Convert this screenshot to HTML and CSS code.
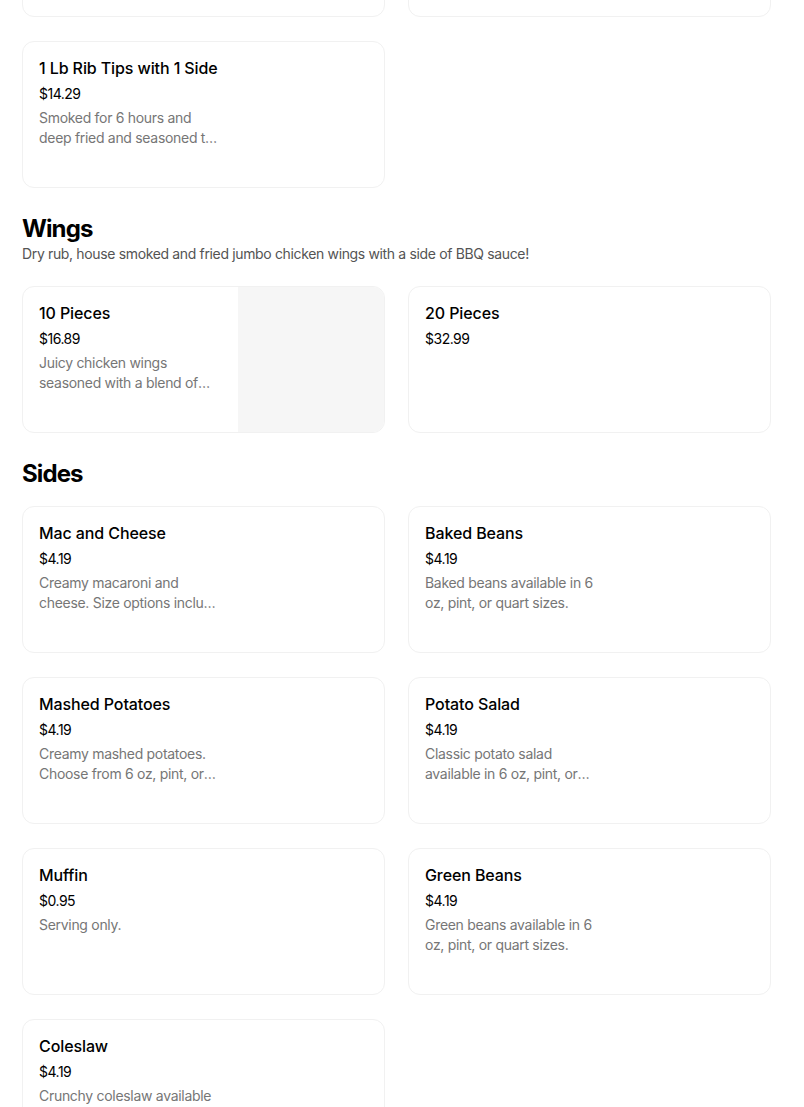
FILE: index.html
```html
<!DOCTYPE html>
<html lang="en">
<head>
<meta charset="utf-8">
<title>Menu</title>
<link rel="stylesheet" href="styles.css">
</head>
<body>
<main class="menu">
  <section class="section section-first">
    <div class="grid">
      <article class="card">
        <div class="info">
          <h3 class="item-title">1/2 Slab Ribs with 2 Sides</h3>
          <div class="price">$21.99</div>
          <p class="desc">Slow smoked pork ribs with your choice of two sides.</p>
        </div>
        <div class="thumb-slot"></div>
      </article>
      <article class="card">
        <div class="info">
          <h3 class="item-title">Full Slab Ribs with 2 Sides</h3>
          <div class="price">$34.99</div>
          <p class="desc">Slow smoked pork ribs with your choice of two sides.</p>
        </div>
        <div class="thumb-slot"></div>
      </article>
      <article class="card">
        <div class="info">
          <h3 class="item-title">1 Lb Rib Tips with 1 Side</h3>
          <div class="price">$14.29</div>
          <p class="desc">Smoked for 6 hours and deep fried and seasoned to perfection.</p>
        </div>
        <div class="thumb-slot"></div>
      </article>
    </div>
  </section>

  <section class="section">
    <h2 class="section-title">Wings</h2>
    <p class="section-desc">Dry rub, house smoked and fried jumbo chicken wings with a side of BBQ sauce!</p>
    <div class="grid grid-after-desc">
      <article class="card">
        <div class="info">
          <h3 class="item-title">10 Pieces</h3>
          <div class="price">$16.89</div>
          <p class="desc">Juicy chicken wings seasoned with a blend of spices and smoked.</p>
        </div>
        <div class="thumb-slot thumb"></div>
      </article>
      <article class="card">
        <div class="info">
          <h3 class="item-title">20 Pieces</h3>
          <div class="price">$32.99</div>
        </div>
        <div class="thumb-slot"></div>
      </article>
    </div>
  </section>

  <section class="section">
    <h2 class="section-title">Sides</h2>
    <div class="grid grid-after-title">
      <article class="card">
        <div class="info">
          <h3 class="item-title">Mac and Cheese</h3>
          <div class="price">$4.19</div>
          <p class="desc">Creamy macaroni and cheese. Size options include 6 oz, pint, or quart.</p>
        </div>
        <div class="thumb-slot"></div>
      </article>
      <article class="card">
        <div class="info">
          <h3 class="item-title">Baked Beans</h3>
          <div class="price">$4.19</div>
          <p class="desc">Baked beans available in 6 oz, pint, or quart sizes.</p>
        </div>
        <div class="thumb-slot"></div>
      </article>
      <article class="card">
        <div class="info">
          <h3 class="item-title">Mashed Potatoes</h3>
          <div class="price">$4.19</div>
          <p class="desc">Creamy mashed potatoes. Choose from 6 oz, pint, or quart sizes.</p>
        </div>
        <div class="thumb-slot"></div>
      </article>
      <article class="card">
        <div class="info">
          <h3 class="item-title">Potato Salad</h3>
          <div class="price">$4.19</div>
          <p class="desc">Classic potato salad available in 6 oz, pint, or quart sizes.</p>
        </div>
        <div class="thumb-slot"></div>
      </article>
      <article class="card">
        <div class="info">
          <h3 class="item-title">Muffin</h3>
          <div class="price">$0.95</div>
          <p class="desc">Serving only.</p>
        </div>
        <div class="thumb-slot"></div>
      </article>
      <article class="card">
        <div class="info">
          <h3 class="item-title">Green Beans</h3>
          <div class="price">$4.19</div>
          <p class="desc">Green beans available in 6 oz, pint, or quart sizes.</p>
        </div>
        <div class="thumb-slot"></div>
      </article>
      <article class="card">
        <div class="info">
          <h3 class="item-title">Coleslaw</h3>
          <div class="price">$4.19</div>
          <p class="desc">Crunchy coleslaw available in 6 oz, pint, or quart sizes.</p>
        </div>
        <div class="thumb-slot"></div>
      </article>
    </div>
  </section>
</main>
</body>
</html>
```

FILE: styles.css
```css
html, body {
  margin: 0;
  padding: 0;
  background: #ffffff;
}

body {
  font-family: "Inter", "Liberation Sans", Arial, sans-serif;
  color: #000000;
  overflow: hidden;
}

.menu {
  padding: 0 33px 0 22px;
}

.section {
  margin-top: 24px;
}

.section-first {
  margin-top: -130px;
}

.grid {
  display: grid;
  grid-template-columns: 1fr 1fr;
  column-gap: 23px;
  row-gap: 24px;
}

.grid-after-desc {
  margin-top: 22px;
}

.grid-after-title {
  margin-top: 17px;
}

.section-title {
  margin: 0;
  padding-top: 2px;
  font-size: 24px;
  line-height: 30px;
  font-weight: 700;
  letter-spacing: -0.9px;
}

.section-desc {
  margin: 0;
  font-size: 14px;
  line-height: 20px;
  color: #545454;
  letter-spacing: -0.35px;
}

.card {
  display: flex;
  height: 147px;
  box-sizing: border-box;
  border: 1px solid #f1f1f1;
  border-radius: 12px;
  overflow: hidden;
  background: #ffffff;
}

.info {
  flex: 1;
  min-width: 0;
  padding: 16px;
}

.thumb-slot {
  width: 146px;
  flex: none;
}

.thumb {
  background: #f6f6f6;
}

.item-title {
  margin: 0;
  font-size: 16px;
  line-height: 20px;
  font-weight: 500;
  letter-spacing: -0.1px;
}

.price {
  margin-top: 6px;
  font-size: 14px;
  line-height: 20px;
  color: #000000;
  letter-spacing: -0.5px;
}

.desc {
  margin: 4px 0 0;
  font-size: 14px;
  line-height: 20px;
  color: #767676;
  letter-spacing: -0.3px;
  display: -webkit-box;
  -webkit-line-clamp: 2;
  -webkit-box-orient: vertical;
  overflow: hidden;
}
```
